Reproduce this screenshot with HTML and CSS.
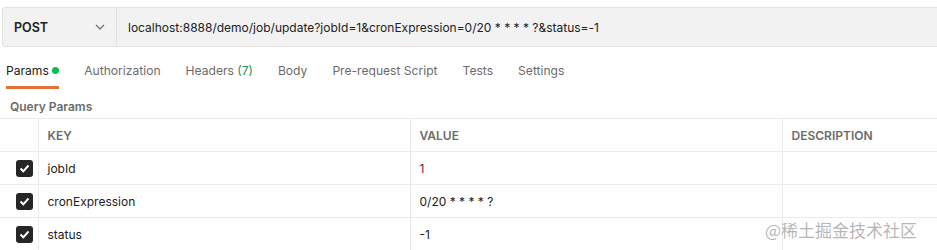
FILE: index.html
```html
<!doctype html>
<html lang="en">
<head>
	<meta charset="UTF-8">
	<title>request</title>
	<link rel="stylesheet" href="styles.css">
</head>
<body>
	<div class="urlbar">
		<div class="method">
			<span>POST</span>
			<svg class="chev" width="10" height="6" viewBox="0 0 10 6"><path d="M1 1l4 4 4-4" fill="none" stroke="#6b6b6b" stroke-width="1.2"/></svg>
		</div>
		<div class="url">localhost:8888/demo/job/update?jobId=1&amp;cronExpression=0/20 * * * * ?&amp;status=-1</div>
	</div>
	<div class="tabs">
		<a class="tab on">Params <i class="dot"></i></a>
		<a class="tab">Authorization</a>
		<a class="tab">Headers <em>(7)</em></a>
		<a class="tab">Body</a>
		<a class="tab">Pre-request Script</a>
		<a class="tab">Tests</a>
		<a class="tab">Settings</a>
	</div>
	<div class="qp">Query Params</div>
	<table class="params">
		<colgroup>
			<col class="c1"><col class="c2"><col class="c3"><col class="c4">
		</colgroup>
		<tr class="head">
			<td class="chk"></td>
			<td>KEY</td>
			<td>VALUE</td>
			<td>DESCRIPTION</td>
		</tr>
		<tr>
			<td class="chk"><span class="box"><svg width="11" height="9" viewBox="0 0 11 9"><path d="M1.5 4.5l2.8 2.8 5.2-5.8" fill="none" stroke="#fff" stroke-width="2"/></svg></span></td>
			<td>jobId</td>
			<td class="num">1</td>
			<td></td>
		</tr>
		<tr>
			<td class="chk"><span class="box"><svg width="11" height="9" viewBox="0 0 11 9"><path d="M1.5 4.5l2.8 2.8 5.2-5.8" fill="none" stroke="#fff" stroke-width="2"/></svg></span></td>
			<td>cronExpression</td>
			<td>0/20 * * * * ?</td>
			<td></td>
		</tr>
		<tr>
			<td class="chk"><span class="box"><svg width="11" height="9" viewBox="0 0 11 9"><path d="M1.5 4.5l2.8 2.8 5.2-5.8" fill="none" stroke="#fff" stroke-width="2"/></svg></span></td>
			<td>status</td>
			<td>-1</td>
			<td></td>
		</tr>
	</table>
	<div class="mark">@稀土掘金技术社区</div>
</body>
</html>
```
FILE: styles.css
```css
body{
	margin: 0;
	width: 937px;
	height: 250px;
	overflow: hidden;
	background: #fff;
	font-family: Inter, "Noto Sans CJK SC", sans-serif;
	color: #212121;
	position: relative;
}
.urlbar{
	display: flex;
	height: 38px;
	margin: 7px 0 0 2px;
	background: #f2f2f2;
	border: 1px solid #e2e2e2;
	border-right: 0;
	border-radius: 3px 0 0 3px;
}
.method{
	width: 114px;
	display: flex;
	align-items: center;
	justify-content: space-between;
	padding: 0 11px 0 11px;
	box-sizing: border-box;
	border-right: 1px solid #e2e2e2;
	font-size: 12.5px;
	font-weight: 600;
}
.url{
	display: flex;
	align-items: center;
	padding-left: 11px;
	font-size: 12px;
	color: #212121;
}
.tabs{
	display: flex;
	gap: 25px;
	margin: 9px 0 0 6px;
	height: 33px;
}
.tab{
	font-size: 12.1px;
	color: #6b6b6b;
	line-height: 30px;
	border-bottom: 3px solid transparent;
	box-sizing: border-box;
	height: 33px;
}
.tab.on{
	color: #212121;
	border-bottom-color: #e0723a;
}
.tab em{
	font-style: normal;
	color: #2f8a51;
}
.dot{
	display: inline-block;
	width: 7px;
	height: 7px;
	border-radius: 50%;
	background: #0cbb52;
	vertical-align: 1px;
}
.qp{
	font-size: 12px;
	font-weight: 600;
	color: #6b6b6b;
	margin: 10px 0 0 10px;
	height: 19px;
}
.params{
	border-collapse: collapse;
	table-layout: fixed;
	width: 937px;
	font-size: 12px;
}
.c1{ width: 38px; }
.c2{ width: 372px; }
.c3{ width: 372px; }
.c4{ width: 155px; }
.params td{
	height: 32px;
	border-top: 1px solid #ebebeb;
	border-left: 1px solid #ebebeb;
	padding: 0 0 0 9px;
	color: #212121;
}
.params td.chk{
	border-left: 0;
	padding: 0;
}
.params .head td{
	font-weight: 600;
	color: #6b6b6b;
}
.params .num{
	color: #6b1a3a;
}
.box{
	display: inline-flex;
	align-items: center;
	justify-content: center;
	width: 17px;
	height: 17px;
	border-radius: 3px;
	background: #262626;
	margin-left: 16px;
	vertical-align: middle;
}
.mark{
	position: absolute;
	left: 765px;
	top: 217px;
	font-size: 17px;
	color: rgba(150,150,150,0.7);
	font-family: "Noto Sans CJK SC", sans-serif;
}
```
